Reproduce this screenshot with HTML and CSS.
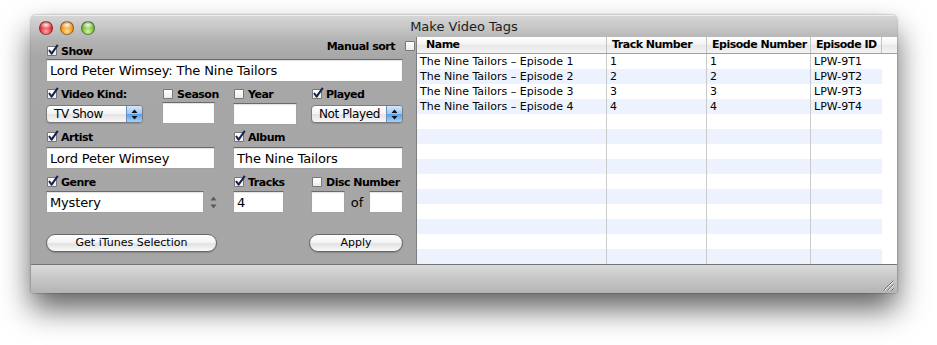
FILE: index.html
```html
<!DOCTYPE html>
<html>
<head>
<meta charset="utf-8">
<title>Make Video Tags</title>
<link rel="stylesheet" href="styles.css">
</head>
<body>
<div class="window">
  <div class="titlebar">
    <div class="lights">
      <span class="light red"></span><span class="light yellow"></span><span class="light green"></span>
    </div>
    <div class="title">Make Video Tags</div>
    <div></div>
  </div>
  <div class="content">
    <div class="form">
      <label class="lbl r1 c1"><span class="cb"><svg class="tick" viewBox="0 0 12 12"><path d="M2 6 L4.6 9.6 L10.8 0.8"/></svg></span>Show</label>
      <div class="manual r1 c4"><span class="mtext">Manual sort</span><span class="cb"></span></div>

      <div class="field r2 span4 h23">Lord Peter Wimsey: The Nine Tailors</div>

      <label class="lbl r3 c1"><span class="cb"><svg class="tick" viewBox="0 0 12 12"><path d="M2 6 L4.6 9.6 L10.8 0.8"/></svg></span>Video Kind:</label>
      <label class="lbl r3 c2"><span class="cb"></span>Season</label>
      <label class="lbl r3 c3"><span class="cb"></span>Year</label>
      <label class="lbl r3 c4"><span class="cb"><svg class="tick" viewBox="0 0 12 12"><path d="M2 6 L4.6 9.6 L10.8 0.8"/></svg></span>Played</label>

      <div class="popup r4 c1 w97"><span>TV Show</span><span class="arr"><svg viewBox="0 0 7 11" width="7" height="11"><path d="M3.5 0.5 L6.5 4 L0.5 4 Z M0.5 7 L6.5 7 L3.5 10.5 Z"/></svg></span></div>
      <div class="field r4 c2 w53 mt0"></div>
      <div class="field r4 c3 w64 mt1"></div>
      <div class="popup r4 c4 w92"><span>Not Played</span><span class="arr"><svg viewBox="0 0 7 11" width="7" height="11"><path d="M3.5 0.5 L6.5 4 L0.5 4 Z M0.5 7 L6.5 7 L3.5 10.5 Z"/></svg></span></div>

      <label class="lbl r5 c1 mb2"><span class="cb"><svg class="tick" viewBox="0 0 12 12"><path d="M2 6 L4.6 9.6 L10.8 0.8"/></svg></span>Artist</label>
      <label class="lbl r5 c3 mb2"><span class="cb"><svg class="tick" viewBox="0 0 12 12"><path d="M2 6 L4.6 9.6 L10.8 0.8"/></svg></span>Album</label>

      <div class="field r6 c12 w169">Lord Peter Wimsey</div>
      <div class="field r6 c34">The Nine Tailors</div>

      <label class="lbl r7 c1 mb1"><span class="cb"><svg class="tick" viewBox="0 0 12 12"><path d="M2 6 L4.6 9.6 L10.8 0.8"/></svg></span>Genre</label>
      <label class="lbl r7 c3 mb1"><span class="cb"><svg class="tick" viewBox="0 0 12 12"><path d="M2 6 L4.6 9.6 L10.8 0.8"/></svg></span>Tracks</label>
      <label class="lbl r7 c4 mb1"><span class="cb"></span>Disc Number</label>

      <div class="combo r8 c12">
        <div class="field w158">Mystery</div>
        <svg class="stepper" viewBox="0 0 7 13" width="7" height="13"><path d="M3.5 0.5 L6.5 4.5 L0.5 4.5 Z M0.5 8.5 L6.5 8.5 L3.5 12.5 Z"/></svg>
      </div>
      <div class="field r8 c3 w51">4</div>
      <div class="disc r8 c4">
        <div class="field w34"></div>
        <span class="of">of</span>
        <div class="field w34"></div>
      </div>

      <button class="btn r10 c12 w171">Get iTunes Selection</button>
      <button class="btn r10 c4 apply">Apply</button>
    </div>

    <div class="table">
      <div class="thead">
        <div class="th first">Name</div>
        <div class="th">Track Number</div>
        <div class="th">Episode Number</div>
        <div class="th">Episode ID</div>
        <div class="th fill"></div>
      </div>
      <div class="tbody">
        <div class="row"><div class="td sep">The Nine Tailors – Episode 1</div><div class="td sep">1</div><div class="td sep">1</div><div class="td">LPW-9T1</div><div class="td fill"></div></div>
        <div class="row"><div class="td sep">The Nine Tailors – Episode 2</div><div class="td sep">2</div><div class="td sep">2</div><div class="td">LPW-9T2</div><div class="td fill"></div></div>
        <div class="row"><div class="td sep">The Nine Tailors – Episode 3</div><div class="td sep">3</div><div class="td sep">3</div><div class="td">LPW-9T3</div><div class="td fill"></div></div>
        <div class="row"><div class="td sep">The Nine Tailors – Episode 4</div><div class="td sep">4</div><div class="td sep">4</div><div class="td">LPW-9T4</div><div class="td fill"></div></div>
        <div class="row"><div class="td sep"></div><div class="td sep"></div><div class="td sep"></div><div class="td"></div><div class="td fill"></div></div>
        <div class="row"><div class="td sep"></div><div class="td sep"></div><div class="td sep"></div><div class="td"></div><div class="td fill"></div></div>
        <div class="row"><div class="td sep"></div><div class="td sep"></div><div class="td sep"></div><div class="td"></div><div class="td fill"></div></div>
        <div class="row"><div class="td sep"></div><div class="td sep"></div><div class="td sep"></div><div class="td"></div><div class="td fill"></div></div>
        <div class="row"><div class="td sep"></div><div class="td sep"></div><div class="td sep"></div><div class="td"></div><div class="td fill"></div></div>
        <div class="row"><div class="td sep"></div><div class="td sep"></div><div class="td sep"></div><div class="td"></div><div class="td fill"></div></div>
        <div class="row"><div class="td sep"></div><div class="td sep"></div><div class="td sep"></div><div class="td"></div><div class="td fill"></div></div>
        <div class="row"><div class="td sep"></div><div class="td sep"></div><div class="td sep"></div><div class="td"></div><div class="td fill"></div></div>
        <div class="row"><div class="td sep"></div><div class="td sep"></div><div class="td sep"></div><div class="td"></div><div class="td fill"></div></div>
        <div class="row"><div class="td sep"></div><div class="td sep"></div><div class="td sep"></div><div class="td"></div><div class="td fill"></div></div>
      </div>
    </div>
  </div>
  <div class="bottombar">
    <svg class="grip" viewBox="0 0 12 12" width="12" height="12">
      <path d="M11.5 1.5 L1.5 11.5 M11.5 5.5 L5.5 11.5 M11.5 9.5 L9.5 11.5" stroke="#6e6e6e" stroke-width="1" fill="none"/>
      <path d="M11.5 2.5 L2.5 11.5 M11.5 6.5 L6.5 11.5" stroke="#f0f0f0" stroke-width="1" fill="none"/>
    </svg>
  </div>
</div>
</body>
</html>
```

FILE: styles.css
```css
* { box-sizing: border-box; }
html { margin: 0; padding: 0; background: #fff; min-height: 100%; }
body {
  margin: 0;
  padding: 15px 0 0 31px;
  min-height: 345px;
  background: #fff;
  font-family: "DejaVu Sans", "Lucida Grande", sans-serif;
  font-size: 11px;
  color: #000;
}

.window {
  width: 866px;
  height: 278px;
  border-radius: 5px 5px 3px 3px;
  background: linear-gradient(#d7d7d7 0, #c4c4c4 14px, #b2b2b2 26px, #a7a7a7 42px, #a6a6a6 100%);
  box-shadow: 0 16px 30px rgba(0, 0, 0, 0.62), 0 0 2px rgba(0, 0, 0, 0.5);
  display: flex;
  flex-direction: column;
  overflow: hidden;
}

.titlebar {
  flex: none;
  height: 22px;
  display: grid;
  grid-template-columns: 1fr auto 1fr;
  align-items: start;
  box-shadow: inset 0 1px 0 rgba(255, 255, 255, 0.6);
}
.lights { display: flex; gap: 7px; padding: 6px 0 0 8px; }
.light {
  width: 14px; height: 14px; border-radius: 50%;
  border: 1px solid rgba(0, 0, 0, 0.35);
}
.red {
  background:
    radial-gradient(ellipse 55% 32% at 50% 24%, rgba(255,255,255,0.95), rgba(255,255,255,0) 100%),
    radial-gradient(circle at 50% 78%, #ffa6a6 0, #e8383c 50%, #a3161a 100%);
}
.yellow {
  background:
    radial-gradient(ellipse 55% 32% at 50% 24%, rgba(255,255,255,0.95), rgba(255,255,255,0) 100%),
    radial-gradient(circle at 50% 78%, #ffe08a 0, #f29a1c 50%, #a95a08 100%);
}
.green {
  background:
    radial-gradient(ellipse 55% 32% at 50% 24%, rgba(255,255,255,0.95), rgba(255,255,255,0) 100%),
    radial-gradient(circle at 50% 78%, #d6f5a0 0, #7cc040 50%, #3f7a16 100%);
}
.title {
  font-size: 13px;
  line-height: 16px;
  padding-top: 4px;
  color: #1c1c1c;
}

.content { flex: none; display: flex; height: 227px; }

.form {
  flex: none;
  width: 385px;
  padding-left: 15px;
  display: grid;
  grid-template-columns: 116px 71px 78px 92px;
  grid-template-rows: 22px 23px 20px 23px 22px 22px 22px 22px 21px 18px;
}
.r1 { grid-row: 1; } .r2 { grid-row: 2; } .r3 { grid-row: 3; } .r4 { grid-row: 4; }
.r5 { grid-row: 5; } .r6 { grid-row: 6; } .r7 { grid-row: 7; } .r8 { grid-row: 8; }
.r10 { grid-row: 10; }
.c1 { grid-column: 1; } .c2 { grid-column: 2; } .c3 { grid-column: 3; } .c4 { grid-column: 4; }
.c12 { grid-column: 1 / span 2; } .c34 { grid-column: 3 / span 2; } .span4 { grid-column: 1 / span 4; }

.lbl {
  align-self: end;
  height: 16px;
  display: flex;
  align-items: center;
  gap: 4px;
  font-weight: bold;
  letter-spacing: -0.5px;
  white-space: nowrap;
}
.mb1 { margin-bottom: 1px; }
.mb2 { margin-bottom: 2px; }

.cb {
  position: relative;
  flex: none;
  display: inline-block;
  width: 10px; height: 10px;
  margin-left: 1px;
  border: 1px solid #777;
  border-radius: 1px;
  background: linear-gradient(#ffffff, #ececec);
}
.tick {
  position: absolute;
  left: -1px; top: -3px;
  width: 12px; height: 12px;
  overflow: visible;
}
.tick path { fill: none; stroke: #16214f; stroke-width: 2; stroke-linejoin: round; }

.manual {
  justify-self: end;
  align-self: start;
  margin: 1px -12px 0 0;
  height: 16px;
  display: flex;
  align-items: center;
  gap: 9px;
  font-weight: bold;
  letter-spacing: -0.5px;
  white-space: nowrap;
}

.field {
  height: 22px;
  background: #fff;
  border: 1px solid #a2a2a2;
  border-top-color: #6a6a6a;
  box-shadow: inset 0 1px 1px rgba(0, 0, 0, 0.12);
  font-size: 13px;
  letter-spacing: -0.15px;
  padding: 0 3px;
  display: flex;
  align-items: center;
  white-space: nowrap;
  overflow: hidden;
}
.h23 { height: 23px; }
.mt0 { align-self: start; }
.mt1 { align-self: start; margin-top: 1px; }
.w53 { width: 53px; }
.w64 { width: 64px; }
.w169 { width: 169px; }
.w158 { width: 158px; }
.w51 { width: 51px; }
.w34 { width: 34px; }
.w97 { width: 97px; }
.w92 { width: 92px; }
.w171 { width: 171px; }

.popup {
  align-self: start;
  margin-top: 3px;
  height: 18px;
  border: 1px solid #7b7b7b;
  border-radius: 4px;
  background: linear-gradient(#ffffff, #f4f4f4 50%, #e3e3e3 52%, #f7f7f7);
  box-shadow: 0 1px 1px rgba(0, 0, 0, 0.15);
  display: flex;
  align-items: center;
  font-size: 12px;
  letter-spacing: -0.4px;
  padding-left: 7px;
  overflow: hidden;
}
.popup .arr {
  margin-left: auto;
  width: 16px;
  height: 100%;
  border-left: 1px solid #6b8fbf;
  background: linear-gradient(#d4e7fc, #9cc8f5 48%, #5f9fe9 52%, #9fd2fb);
  display: flex;
  align-items: center;
  justify-content: center;
}
.popup .arr path { fill: #111; }

.combo { display: flex; align-items: center; gap: 6px; }
.stepper path { fill: #5a5a5a; }

.disc { display: flex; justify-content: space-between; align-items: center; }
.of { font-size: 13px; }

.btn {
  align-self: start;
  height: 18px;
  margin: 0;
  padding: 0;
  border: 1px solid #686868;
  border-radius: 9px;
  background: linear-gradient(#ffffff, #f5f5f5 45%, #e2e2e2 55%, #fafafa);
  box-shadow: 0 1px 1px rgba(0, 0, 0, 0.2);
  font-family: inherit;
  font-size: 11px;
  color: #000;
  text-align: center;
  line-height: 16px;
}
.apply { width: 94px; margin-left: -2px; }

.table {
  flex: 1;
  border-left: 1px solid #7e7e7e;
  background: #fff;
}
.thead {
  display: grid;
  grid-template-columns: 190px 100px 104px 71px 1fr;
  height: 17px;
  border-bottom: 1px solid #9f9f9f;
  background: linear-gradient(#ffffff, #f3f3f3 50%, #e7e7e7 52%, #f4f4f4);
}
.th {
  font-weight: bold;
  letter-spacing: -0.5px;
  line-height: 16px;
  padding-left: 5px;
  border-right: 1px solid #c2c2c2;
  white-space: nowrap;
  overflow: hidden;
}
.th.first { padding-left: 9px; }
.th.fill { border-right: 0; }

.row {
  display: grid;
  grid-template-columns: 190px 100px 104px 71px 1fr;
  height: 15px;
  line-height: 15px;
}
.td { padding-left: 3px; white-space: nowrap; overflow: hidden; }
.td.sep { border-right: 1px solid #cbcbcb; }
.row:nth-child(even) .td:not(.fill) { background: #edf3fe; }

.bottombar {
  flex: 1;
  border-top: 1px solid #747474;
  background: linear-gradient(#dadada, #c6c6c6 50%, #b4b4b4);
  display: flex;
  justify-content: flex-end;
  align-items: flex-end;
  padding: 0 3px 2px 0;
}
```
